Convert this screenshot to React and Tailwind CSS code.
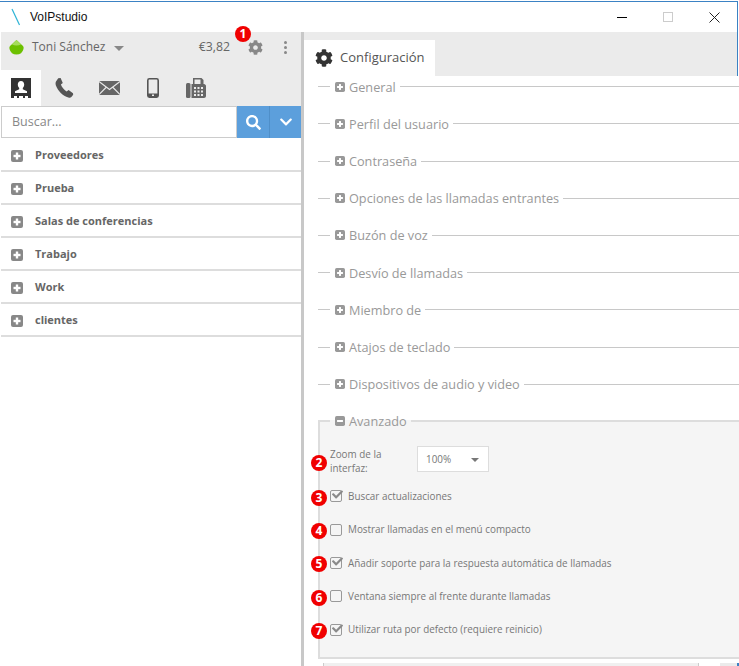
import { FaCog, FaSearch, FaChevronDown, FaCheck } from 'react-icons/fa'

const groups = ['Proveedores', 'Prueba', 'Salas de conferencias', 'Trabajo', 'Work', 'clientes']

const sections = [
  'General',
  'Perfil del usuario',
  'Contraseña',
  'Opciones de las llamadas entrantes',
  'Buzón de voz',
  'Desvío de llamadas',
  'Miembro de',
  'Atajos de teclado',
  'Dispositivos de audio y video',
]

const options = [
  { n: 3, label: 'Buscar actualizaciones', checked: true },
  { n: 4, label: 'Mostrar llamadas en el menú compacto', checked: false },
  { n: 5, label: 'Añadir soporte para la respuesta automática de llamadas', checked: true },
  { n: 6, label: 'Ventana siempre al frente durante llamadas', checked: false },
  { n: 7, label: 'Utilizar ruta por defecto (requiere reinicio)', checked: true },
]

const Badge = ({ n, className }) => (
  <span
    className={`absolute flex h-[16px] w-[16px] items-center justify-center rounded-full bg-[#f00000] text-[12px] font-bold leading-none text-white ${className}`}
  >
    {n}
  </span>
)

const BoxIcon = ({ minus, size = 12 }) => (
  <svg width={size} height={size} viewBox="0 0 12 12" className="shrink-0">
    <rect width="12" height="12" rx="2" fill="currentColor" />
    <rect x="2.5" y="4.8" width="7" height="2.4" fill="#fff" />
    {!minus && <rect x="4.8" y="2.5" width="2.4" height="7" fill="#fff" />}
  </svg>
)

const ContactIcon = () => (
  <svg width="20" height="20" viewBox="0 0 20 20">
    <path fill="#333" d="M0 0h20v20h-3v-2h-3v2h-2v-2H8v2H6v-2H3v2H0z" />
    <path
      fill="#fff"
      d="M10 3c2 0 3.2 1.5 3.2 3.6 0 1.4-.6 2.7-1.4 3.4v1.2l4.2 2V15H4v-1.8l4.2-2V10C7.4 9.3 6.8 8 6.8 6.6 6.8 4.5 8 3 10 3z"
    />
  </svg>
)

const PhoneIcon = () => (
  <svg width="20" height="20" viewBox="0 0 20 20">
    <path
      fill="#555"
      d="M3.2.3 5.6 0l2.2 5-1.9 1.6c.9 2.7 3 5.3 5.7 6.9l2-1.5 4.4 3.2.2 1.6-1.8 2.3c-.8.8-1.9.9-3 .5C7.7 17.900 3 13 .9 7.500.4 6 .5 4.700 1 3.600z"
    />
  </svg>
)

const MailIcon = () => (
  <svg width="21" height="14" viewBox="0 0 21 14">
    <rect width="21" height="14" fill="#666" />
    <path fill="none" stroke="#ebebeb" strokeWidth="1.1" d="M0 .5l10.5 8L21 .5M0 13.5l7.5-7.5M21 13.5 13.5 6" />
  </svg>
)

const MobileIcon = () => (
  <svg width="12" height="20" viewBox="0 0 12 20">
    <rect x="0.8" y="0.8" width="10.4" height="18.4" rx="1.6" fill="none" stroke="#555" strokeWidth="1.6" />
    <rect x="1" y="15.5" width="10" height="3.5" fill="#555" />
    <rect x="5" y="16.5" width="2" height="1.5" fill="#ebebeb" />
  </svg>
)

const FaxIcon = () => (
  <svg width="20" height="20" viewBox="0 0 20 20">
    <rect x="0" y="5" width="4.5" height="15" rx="1.5" fill="#666" />
    <path fill="#666" d="M5.5 6H7V0h8.5l2 2v4H18c1 0 2 1 2 2v10c0 1-1 2-2 2H5.500z" />
    <path fill="#ebebeb" d="M8.5 1.5h6V6h-6z" />
    <path fill="#ebebeb" d="M8 9h2v2H8zM11.5 9h2v2h-2zM15 9h2v2h-2zM8 12.5h2v2H8zM11.5 12.5h2v2h-2zM15 12.5h2v2h-2zM8 16h2v2H8zM11.5 16h2v2h-2zM15 16h2v2h-2z" />
  </svg>
)

const Checkbox = ({ checked }) => (
  <span className="relative h-[12px] w-[12px] shrink-0 rounded-[2px] border border-[#999] bg-[#f5f5f5]">
    {checked && <FaCheck className="absolute left-[1px] top-[-2px] text-[11px] text-[#8a8a8a]" />}
  </span>
)

const SectionHeader = ({ label, minus, className }) => (
  <legend className={`flex items-center gap-[4px] pl-[5px] pr-[4px] text-[12.7px] leading-[18px] text-[#999] ${className}`}>
    <span className="text-[#999]">
      <BoxIcon minus={minus} size={10} />
    </span>
    {label}
  </legend>
)

export default function App() {
  return (
    <div
      className="flex h-[666px] w-[739px] flex-col overflow-hidden bg-white text-[#666]"
      style={{ fontFamily: '"Open Sans", sans-serif' }}
    >
      {/* title bar */}
      <div className="mr-px mt-px flex h-[31px] shrink-0 items-center border-r border-t border-[#3b82c4] pl-[11px]">
        <svg width="10" height="18" viewBox="0 0 10 18">
          <path d="M1 1l7.5 16" stroke="#2fb4d6" strokeWidth="1.2" fill="none" />
        </svg>
        <span className="ml-[9px] text-[12px] text-[#111]" style={{ fontFamily: '"Liberation Sans", sans-serif' }}>
          VoIPstudio
        </span>
        <div className="ml-auto flex h-full items-center">
          <div className="flex w-[46px] justify-center">
            <div className="h-px w-[10px] bg-black" />
          </div>
          <div className="flex w-[46px] justify-center">
            <div className="h-[10px] w-[10px] border border-[#ccc]" />
          </div>
          <div className="flex w-[46px] justify-center">
            <svg width="11" height="11" viewBox="0 0 11 11">
              <path d="M.5.5l10 10M10.5.5l-10 10" stroke="#222" strokeWidth="1" fill="none" />
            </svg>
          </div>
        </div>
      </div>

      <div className="flex min-h-0 flex-1">
        {/* left panel */}
        <div className="flex w-[301px] shrink-0 flex-col pl-px">
          <div className="flex h-[38px] shrink-0 items-center bg-[#ebebeb] pb-[8px] pl-[8px] pr-[14px]">
            <svg width="15" height="15" viewBox="0 0 15 15" className="shrink-0">
              <path d="M7.5 0 14 6q1 1 .5 3-1.500 5.500-7 5.500T.5 9Q0 7 1 6z" fill="#6cc000" />
              <path d="M7.5 0 12 4.500q-2 1-4.500 1T3 4.500z" fill="#a5dc5a" />
            </svg>
            <span className="ml-[8px] text-[12px]">Toni Sánchez</span>
            <span className="ml-[9px] mt-[2px] h-0 w-0 border-x-[5px] border-t-[5px] border-x-transparent border-t-[#888]" />
            <span className="ml-auto text-[12.3px]">€3,82</span>
            <div className="relative ml-[18px]">
              <FaCog className="text-[15px] text-[#888]" />
              <Badge n={1} className="left-[-13px] top-[-14px]" />
            </div>
            <div className="ml-[21px] flex flex-col gap-[2px]">
              <span className="h-[3px] w-[3px] rounded-full bg-[#888]" />
              <span className="h-[3px] w-[3px] rounded-full bg-[#888]" />
              <span className="h-[3px] w-[3px] rounded-full bg-[#888]" />
            </div>
          </div>

          <div className="flex h-[36px] shrink-0 items-center bg-[#ebebeb]">
            <div className="flex h-full w-[40px] items-center justify-center bg-white">
              <ContactIcon />
            </div>
            <div className="ml-[14px] flex w-[20px] justify-center"><PhoneIcon /></div>
            <div className="ml-[24px] flex w-[21px] justify-center"><MailIcon /></div>
            <div className="ml-[27px] flex w-[12px] justify-center"><MobileIcon /></div>
            <div className="ml-[27px] flex w-[20px] justify-center"><FaxIcon /></div>
          </div>

          <div className="flex h-[32px] shrink-0">
            <div className="flex min-w-0 flex-1 items-center border border-[#ccc] bg-white pl-[10px] pt-px text-[12.5px] text-[#888]">
              Buscar...
            </div>
            <div className="flex w-[32px] items-center justify-center bg-[#5c9fdc]">
              <FaSearch className="text-[15px] text-white" />
            </div>
            <div className="flex w-[32px] items-center justify-center border-l border-[#4f8fc9] bg-[#5c9fdc]">
              <FaChevronDown className="text-[14px] text-white" />
            </div>
          </div>

          <div className="mt-[1px] flex flex-col">
            {groups.map((g) => (
              <div
                key={g}
                className="flex h-[33px] shrink-0 items-center border-b-2 border-[#ddd] pl-[10px] pt-[2px] text-[11px] font-bold text-[#666]"
              >
                <span className="text-[#888]">
                  <BoxIcon />
                </span>
                <span className="ml-[12px]">{g}</span>
              </div>
            ))}
          </div>
        </div>

        <div className="w-[3px] shrink-0 bg-[#c8c8c8]" />

        {/* right panel */}
        <div className="flex min-w-0 flex-1 flex-col">
          <div className="mr-px flex h-[44px] shrink-0 items-end border-r border-[#3b82c4] bg-[#ebebeb]">
            <div className="flex h-[36px] w-[131px] items-center bg-white pl-[11px] text-[13px] text-[#555]">
              <FaCog className="text-[18px] text-[#333]" />
              <span className="ml-[7px]">Configuración</span>
            </div>
          </div>

          <div className="flex min-h-0 flex-1 flex-col overflow-hidden pl-[14px]">
            {sections.map((s) => (
              <fieldset key={s} className="-mr-[4px] h-[37.2px] shrink-0 border-t border-[#c8c8c8] first:mt-[1.7px]">
                <SectionHeader label={s} className="ml-[12px]" />
              </fieldset>
            ))}

            <fieldset className="-mr-[20px] mt-[-0.7px] h-[247px] shrink-0 border-2 border-[#ddd] bg-[#f5f5f5] pl-[10px] text-[9.9px] text-[#777]">
              <SectionHeader label="Avanzado" minus />
              <div className="relative mt-[9px] flex h-[40px] items-center">
                <Badge n={2} className="left-[-19px] top-[16px]" />
                <div className="mt-[5px] w-[87px] leading-[14px]">Zoom de la interfaz:</div>
                <div className="flex h-[26px] w-[72px] items-center border border-[#ddd] bg-white pl-[8px] pt-[2px]">
                  100%
                  <span className="ml-[20px] h-0 w-0 border-x-[4px] border-t-[4px] border-x-transparent border-t-[#777]" />
                </div>
              </div>
              <div className="mt-[1px] flex flex-col">
                {options.map((o) => (
                  <div key={o.n} className="relative flex h-[33.3px] items-center gap-[6px]">
                    <Badge n={o.n} className="left-[-19px] top-[10px]" />
                    <Checkbox checked={o.checked} />
                    <span>{o.label}</span>
                  </div>
                ))}
              </div>
            </fieldset>

            {/* horizontal scrollbar, cut off by the window */}
            <div className="mr-[-1px] mt-[4px] flex h-[5px] shrink-0">
              <div className="ml-[5px] w-[376px] border-x border-[#ccc] bg-[#f0f0f0]" />
              <div className="ml-[21px] w-[17px] bg-[#ebebeb]" />
              <div className="w-[2px] bg-[#3b82c4]" />
            </div>
          </div>
        </div>
      </div>
    </div>
  )
}
